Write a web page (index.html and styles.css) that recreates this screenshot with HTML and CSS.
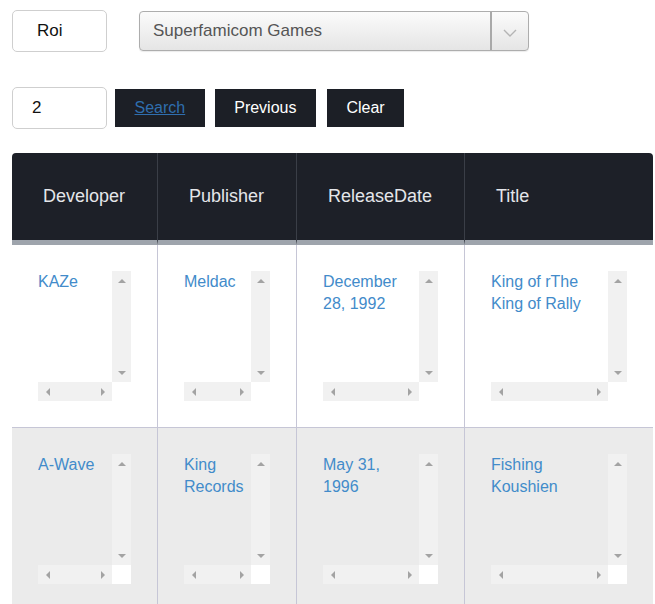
FILE: index.html
```html
<!DOCTYPE html>
<html lang="en">
<head>
<meta charset="utf-8">
<title>Games</title>
<link rel="stylesheet" href="styles.css">
</head>
<body>
<div class="page">
  <div class="toolbar">
    <input class="field field-name" type="text" value="Roi">
    <div class="select">
      <span class="select-label">Superfamicom Games</span>
      <span class="select-arrow">
        <svg width="14" height="8" viewBox="0 0 14 8"><polyline points="1,1 7,7 13,1" fill="none" stroke="#b4b4b4" stroke-width="1.4"/></svg>
      </span>
    </div>
  </div>
  <div class="pager">
    <input class="field field-page" type="text" value="2">
    <button class="btn btn-first"><a href="#">Search</a></button>
    <button class="btn">Previous</button>
    <button class="btn">Clear</button>
  </div>
  <table class="grid">
    <colgroup>
      <col class="c1"><col class="c2"><col class="c3"><col class="c4">
    </colgroup>
    <thead>
      <tr>
        <th class="first">Developer</th>
        <th>Publisher</th>
        <th>ReleaseDate</th>
        <th class="last">Title</th>
      </tr>
    </thead>
    <tbody>
      <tr>
        <td class="first"><div class="box"><div class="box-text">KAZe</div><div class="vbar"><i class="up"></i><i class="down"></i></div><div class="hbar"><i class="left"></i><i class="right"></i></div><div class="corner"></div></div></td>
        <td><div class="box"><div class="box-text">Meldac</div><div class="vbar"><i class="up"></i><i class="down"></i></div><div class="hbar"><i class="left"></i><i class="right"></i></div><div class="corner"></div></div></td>
        <td><div class="box"><div class="box-text">December<br>28, 1992</div><div class="vbar"><i class="up"></i><i class="down"></i></div><div class="hbar"><i class="left"></i><i class="right"></i></div><div class="corner"></div></div></td>
        <td><div class="box"><div class="box-text">King of rThe<br>King of Rally</div><div class="vbar"><i class="up"></i><i class="down"></i></div><div class="hbar"><i class="left"></i><i class="right"></i></div><div class="corner"></div></div></td>
      </tr>
      <tr class="alt">
        <td class="first"><div class="box"><div class="box-text">A-Wave</div><div class="vbar"><i class="up"></i><i class="down"></i></div><div class="hbar"><i class="left"></i><i class="right"></i></div><div class="corner"></div></div></td>
        <td><div class="box"><div class="box-text">King<br>Records</div><div class="vbar"><i class="up"></i><i class="down"></i></div><div class="hbar"><i class="left"></i><i class="right"></i></div><div class="corner"></div></div></td>
        <td><div class="box"><div class="box-text">May 31,<br>1996</div><div class="vbar"><i class="up"></i><i class="down"></i></div><div class="hbar"><i class="left"></i><i class="right"></i></div><div class="corner"></div></div></td>
        <td><div class="box"><div class="box-text">Fishing<br>Koushien</div><div class="vbar"><i class="up"></i><i class="down"></i></div><div class="hbar"><i class="left"></i><i class="right"></i></div><div class="corner"></div></div></td>
      </tr>
    </tbody>
  </table>
</div>
</body>
</html>
```
FILE: styles.css
```css
* { box-sizing: border-box; }
html, body { margin: 0; padding: 0; background: #fff; }
body {
  font-family: "Liberation Sans", Arial, sans-serif;
  overflow: hidden;
}
.page {
  padding: 10px 0 0 12px;
  width: 655px;
}
.toolbar {
  display: flex;
  align-items: center;
  gap: 32px;
  height: 42px;
}
.field {
  width: 95px;
  height: 42px;
  border: 1px solid #cfcfcf;
  border-radius: 5px;
  font-family: "Liberation Sans", Arial, sans-serif;
  font-size: 17px;
  color: #111;
  background: #fff;
  outline: none;
}
.field-name { padding: 0 0 0 24px; }
.field-page { padding: 0 0 0 19px; }
.select {
  width: 390px;
  height: 40px;
  display: flex;
  align-items: center;
  border: 1px solid #adadad;
  border-radius: 4px;
  background: linear-gradient(#fbfbfb, #e5e5e5);
  box-shadow: 0 1px 1px rgba(0,0,0,0.08);
}
.select-label {
  flex: 1;
  padding-left: 13px;
  font-size: 17px;
  color: #555;
}
.select-arrow {
  width: 38px;
  height: 100%;
  display: flex;
  align-items: center;
  justify-content: center;
  border-left: 2px solid #a9a9a9;
  padding-top: 3px;
}
.pager {
  display: flex;
  align-items: center;
  margin-top: 35px;
  height: 42px;
}
.btn {
  height: 38px;
  padding: 0 19.5px;
  margin-left: 10px;
  border: none;
  border-radius: 0;
  background: #1c1f26;
  color: #fff;
  font-family: "Liberation Sans", Arial, sans-serif;
  font-size: 16px;
}
.btn-first { margin-left: 8px; }
.btn a { color: #2f6eae; text-decoration: underline; }
.pager .btn:last-child { margin-left: 11px; }

.grid {
  margin-top: 24px;
  width: 641px;
  table-layout: fixed;
  border-collapse: separate;
  border-spacing: 0;
}
.c1 { width: 145px; }
.c2 { width: 139px; }
.c3 { width: 168px; }
.c4 { width: 189px; }
.grid th {
  height: 92px;
  padding: 0 0 0 31px;
  text-align: left;
  font-weight: normal;
  font-size: 18px;
  color: #e4e6ea;
  background: #1d2028;
  border-left: 1px solid #3a3e47;
  border-bottom: 5px solid #9ea4ac;
}
.grid th.first { border-left: none; padding-left: 31px; border-top-left-radius: 4px; }
.grid th.last { border-top-right-radius: 4px; }
.grid td {
  padding: 26px;
  vertical-align: top;
  border-left: 1px solid #c6c6d6;
  background: #fff;
}
.grid td.first { border-left: none; }
.grid tr.alt td {
  background: #ebebeb;
  border-top: 1px solid #c6c6d6;
}
.box {
  display: grid;
  grid-template-columns: 1fr 19px;
  grid-template-rows: 111px 19px;
  height: 130px;
  font-size: 16px;
  line-height: 22px;
  color: #428bca;
}
.box-text { overflow: hidden; white-space: nowrap; }
.vbar, .hbar {
  background: #f1f1f1;
  display: flex;
  justify-content: space-between;
  align-items: center;
}
.vbar { flex-direction: column; }
.corner { background: #fff; }
.vbar i, .hbar i {
  display: flex;
  align-items: center;
  justify-content: center;
  width: 19px;
  height: 19px;
}
.vbar i::before, .hbar i::before {
  content: "";
  display: block;
  width: 0;
  height: 0;
}
.up::before { border-left: 4px solid transparent; border-right: 4px solid transparent; border-bottom: 4px solid #a3a3a3; }
.down::before { border-left: 4px solid transparent; border-right: 4px solid transparent; border-top: 4px solid #a3a3a3; }
.left::before { border-top: 4px solid transparent; border-bottom: 4px solid transparent; border-right: 4px solid #a3a3a3; }
.right::before { border-top: 4px solid transparent; border-bottom: 4px solid transparent; border-left: 4px solid #a3a3a3; }
```
